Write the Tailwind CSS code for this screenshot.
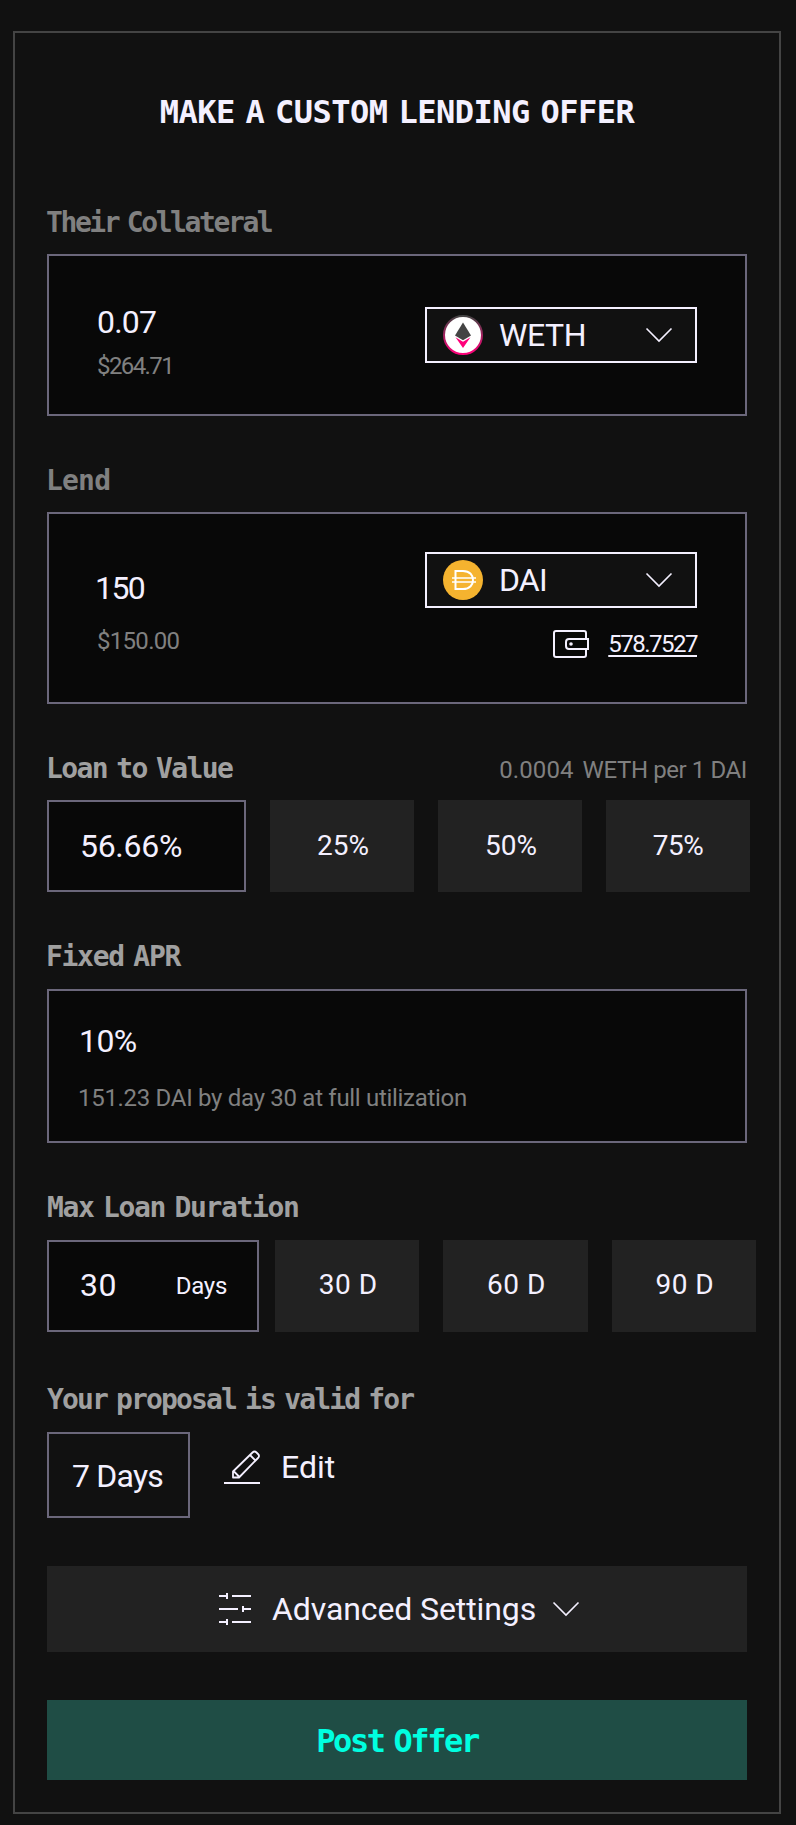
<!DOCTYPE html>
<html lang="en">
<head>
<meta charset="utf-8">
<title>Make a custom lending offer</title>
<script src="https://cdn.jsdelivr.net/npm/@tailwindcss/browser@4"></script>
</head>
<body class="bg-[#111111] font-['Roboto',sans-serif] text-[#f4f0ff]">
<main class="mx-[13px] mt-[31px] w-[768px] h-[1783px] border-2 border-[#444444] px-8 pt-[59px] flow-root">
  <h1 class="h-10 text-center font-['DejaVu_Sans_Mono',monospace] text-[32px] leading-10 font-bold whitespace-nowrap tracking-[-0.5px] [word-spacing:-8px]">MAKE A CUSTOM LENDING OFFER</h1>

  <section class="mt-[75px]">
    <h2 class="mb-[15px] -ml-px font-['DejaVu_Sans_Mono',monospace] text-[28px] leading-8 font-bold text-[#808080] tracking-[-2.4px] [word-spacing:-6px]">Their Collateral</h2>
    <div class="flex h-[162px] justify-between border-2 border-[#6b677b] bg-[#080808] pl-12 pr-12">
      <div class="pt-[46px]">
        <div class="text-[32px] leading-10 tracking-[-0.8px]">0.07</div>
        <div class="mt-2 text-2xl leading-8 text-[#808080] tracking-[-1.6px]">$264.71</div>
      </div>
      <button class="mt-[51px] flex h-14 w-[272px] items-center border-2 border-[#f4f0ff] bg-[#111111] pl-4 pr-[22px]">
        <svg class="size-10" viewBox="0 0 40 40">
          <defs><linearGradient id="ring" x1="0" y1="0" x2="0" y2="1"><stop offset="0" stop-color="#444"/><stop offset="1" stop-color="#ff007a"/></linearGradient></defs>
          <circle cx="20" cy="20" r="19" fill="#fff" stroke="url(#ring)" stroke-width="2"/>
          <path d="M20 7.5 28 20.5 20 25.2 12 20.5Z" fill="#444"/>
          <path d="M12.5 22.2 20 26.8 27.5 22.2 20 33Z" fill="#ff007a"/>
        </svg>
        <span class="ml-4 text-[32px] leading-10 tracking-[-0.4px]">WETH</span>
        <svg class="ml-auto h-4 w-7" viewBox="0 0 28 16" fill="none" stroke="currentColor" stroke-width="1.6"><path d="M1.5 1.5 14 14 26.5 1.5"/></svg>
      </button>
    </div>
  </section>

  <section class="mt-[49px]">
    <h2 class="mb-[15px] -ml-px font-['DejaVu_Sans_Mono',monospace] text-[28px] leading-8 font-bold text-[#808080] tracking-[-0.8px]">Lend</h2>
    <div class="flex h-[192px] justify-between border-2 border-[#6b677b] bg-[#080808] pl-12 pr-12">
      <div class="pt-[54px]">
        <div class="-ml-0.5 text-[32px] leading-10 tracking-[-1.6px]">150</div>
        <div class="mt-[17px] text-2xl leading-8 text-[#808080] tracking-[-0.7px]">$150.00</div>
      </div>
      <div class="pt-[38px]">
        <button class="flex h-14 w-[272px] items-center border-2 border-[#f4f0ff] bg-[#111111] pl-4 pr-[22px]">
          <svg class="size-10" viewBox="0 0 40 40">
            <circle cx="20" cy="20" r="20" fill="#f5b32f"/>
            <g fill="none" stroke="#fff" stroke-width="2"><path d="M12.500 11H20C27 11 30 15.500 30 20S27 29 20 29H12.500Z"/><path stroke-width="1.7" d="M9 18H33M9 22H33"/></g>
          </svg>
          <span class="ml-4 text-[32px] leading-10 tracking-[-0.8px]">DAI</span>
          <svg class="ml-auto h-4 w-7" viewBox="0 0 28 16" fill="none" stroke="currentColor" stroke-width="1.6"><path d="M1.500 1.500 14 14 26.500 1.500"/></svg>
        </button>
        <div class="mt-5 flex items-center justify-end">
          <svg class="h-8 w-9" viewBox="0 0 36 32" fill="none" stroke="currentColor" stroke-width="2"><path d="M33 10V5Q33 3 31 3H3Q1 3 1 5V27Q1 29 3 29H31Q33 29 33 27V20"/><path d="M35 11H16Q13 11 13 14V18Q13 21 16 21H35Z"/><circle cx="18" cy="16" r="1.8" fill="currentColor" stroke="none"/></svg>
          <span class="ml-[19px] text-2xl leading-8 tracking-[-1.5px] underline decoration-2 underline-offset-[3px]">578.7527</span>
        </div>
      </div>
    </div>
  </section>

  <section class="mt-[49px]">
    <div class="mb-[15px] flex h-8 justify-between whitespace-nowrap">
      <h2 class="-ml-px font-['DejaVu_Sans_Mono',monospace] text-[28px] leading-8 font-bold text-[#a0a0a0] tracking-[-1.6px] [word-spacing:-6px]">Loan to Value</h2>
      <div class="mt-px flex gap-[9px] text-2xl leading-8 text-[#808080] tracking-[-0.2px]"><span class="tracking-[0.1px]">0.0004</span><span class="tracking-[-0.4px]">WETH per 1 DAI</span></div>
    </div>
    <div class="flex h-[92px] w-[703px] gap-6 text-[28px]">
      <div class="w-[199px] shrink-0 border-2 border-[#6b677b] bg-[#080808] pl-[31px] pt-[24px] text-[32px] leading-10 tracking-[-0.3px]">56.66%</div>
      <button class="w-36 bg-[#222222] pl-0.5">25%</button>
      <button class="w-36 bg-[#222222] pl-0.5">50%</button>
      <button class="w-36 bg-[#222222] tracking-[-0.5px]">75%</button>
    </div>
  </section>

  <section class="mt-[49px]">
    <h2 class="mb-4 -ml-px font-['DejaVu_Sans_Mono',monospace] text-[28px] leading-8 font-bold text-[#a0a0a0] tracking-[-1.3px] [word-spacing:-6px]">Fixed APR</h2>
    <div class="h-[154px] border-2 border-[#6b677b] bg-[#080808] pl-[29px] pt-[30px]">
      <div class="pl-px text-[32px] leading-10 tracking-[-0.6px]">10%</div>
      <div class="mt-[21px] text-2xl leading-8 text-[#808080] tracking-[-0.3px]">151.23 DAI by day 30 at full utilization</div>
    </div>
  </section>

  <section class="mt-[49px]">
    <h2 class="mb-4 font-['DejaVu_Sans_Mono',monospace] text-[28px] leading-8 font-bold text-[#a0a0a0] tracking-[-1.35px] [word-spacing:-6px]">Max Loan Duration</h2>
    <div class="flex h-[92px] w-[709px] text-[28px] tracking-[0.5px]">
      <div class="mr-4 flex w-[212px] shrink-0 justify-between border-2 border-[#6b677b] bg-[#080808] pl-[31px] pr-[30px] pt-[23px] leading-10">
        <span class="text-[32px]">30</span><span class="text-2xl leading-[42px] tracking-[-0.3px]">Days</span>
      </div>
      <div class="grid grow grid-cols-3 gap-6">
        <button class="bg-[#222222] pl-0.5 pb-0.5">30 D</button>
        <button class="bg-[#222222] pl-0.5 pb-0.5">60 D</button>
        <button class="bg-[#222222] pl-0.5 pb-0.5">90 D</button>
      </div>
    </div>
  </section>

  <section class="mt-[52px]">
    <h2 class="mb-4 font-['DejaVu_Sans_Mono',monospace] text-[28px] leading-8 font-bold text-[#a0a0a0] tracking-[-1.85px] [word-spacing:-6px]">Your proposal is valid for</h2>
    <div class="flex h-[86px] text-[32px] leading-10">
      <div class="w-[143px] border-2 border-[#6b677b] pr-0.5 pt-[22px] text-center tracking-[-0.8px]">7 Days</div>
      <button class="ml-[34px] flex h-[70px] items-center">
        <svg class="h-9 w-9" viewBox="0 0 36 36" fill="none" stroke="currentColor" stroke-width="2"><path d="M0 34H36"/><path stroke-width="1.8" stroke-linejoin="round" d="M9 28.500V22.500L28.500 3.500Q30.500 1.500 32.500 3.500L34 5Q36 7 34 9L15 28.500ZM9.500 22 15.500 28M26 6 31.500 11.500"/></svg>
        <span class="ml-[21px]">Edit</span>
      </button>
    </div>
  </section>

  <button class="mt-12 flex h-[86px] w-full items-center bg-[#222222] pl-[172px]">
    <svg class="size-8" viewBox="0 0 32 32" fill="none" stroke="currentColor" stroke-width="2"><path d="M0 3H8M8 0V6M13 3H32M0 16H19M24 13V19M24 16H32M0 29H8M8 26V32M13 29H32"/></svg>
    <span class="ml-[21px] text-[32px] leading-10 tracking-[-0.1px]">Advanced Settings</span>
    <svg class="ml-4 h-4 w-7" viewBox="0 0 28 16" fill="none" stroke="currentColor" stroke-width="1.6"><path d="M1.500 1.500 14 14 26.500 1.500"/></svg>
  </button>
  <button class="mt-12 h-20 w-full bg-[#1f4d45] pt-0.5 font-['DejaVu_Sans_Mono',monospace] text-[32px] leading-10 font-bold text-[#00ffe0] tracking-[-2.4px] [word-spacing:-7px]">Post Offer</button>
</main>
</body>
</html>
